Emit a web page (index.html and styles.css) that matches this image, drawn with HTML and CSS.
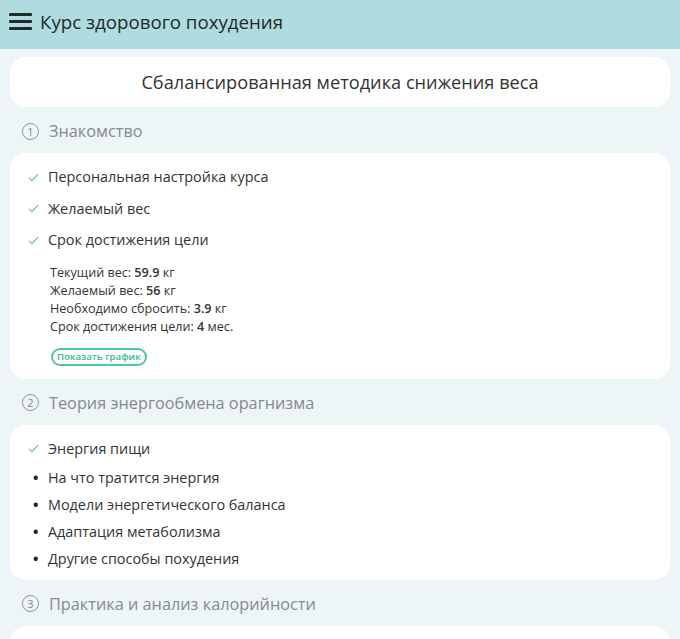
FILE: index.html
```html
<!DOCTYPE html>
<html lang="ru">
<head>
  <meta charset="UTF-8">
  <meta name="viewport" content="width=device-width, initial-scale=1.0">
  <title>Курс здорового похудения</title>
  <link rel="stylesheet" href="styles.css">
</head>
<body>
  <header class="topbar">
    <span class="burger"><i></i><i></i><i></i></span>
    <span class="topbar-title">Курс здорового похудения</span>
  </header>

  <main class="content">
    <div class="card intro">Сбалансированная методика снижения веса</div>

    <h2 class="section-title"><span class="num">1</span>Знакомство</h2>
    <div class="card lessons">
      <div class="lesson done"><svg class="tick" viewBox="0 0 12 10"><path d="M1 5.5 L4.2 8.6 L11 1.2"/></svg>Персональная настройка курса</div>
      <div class="lesson done"><svg class="tick" viewBox="0 0 12 10"><path d="M1 5.5 L4.2 8.6 L11 1.2"/></svg>Желаемый вес</div>
      <div class="lesson done"><svg class="tick" viewBox="0 0 12 10"><path d="M1 5.5 L4.2 8.6 L11 1.2"/></svg>Срок достижения цели</div>
      <div class="summary">
        <div>Текущий вес: <b>59.9</b> кг</div>
        <div>Желаемый вес: <b>56</b> кг</div>
        <div>Необходимо сбросить: <b>3.9</b> кг</div>
        <div>Срок достижения цели: <b>4</b> мес.</div>
      </div>
      <button class="chart-btn">Показать график</button>
    </div>

    <h2 class="section-title"><span class="num">2</span>Теория энергообмена орагнизма</h2>
    <div class="card lessons compact">
      <div class="lesson done"><svg class="tick" viewBox="0 0 12 10"><path d="M1 5.5 L4.2 8.6 L11 1.2"/></svg>Энергия пищи</div>
      <div class="lesson">На что тратится энергия</div>
      <div class="lesson">Модели энергетического баланса</div>
      <div class="lesson">Адаптация метаболизма</div>
      <div class="lesson">Другие способы похудения</div>
    </div>

    <h2 class="section-title"><span class="num">3</span>Практика и анализ калорийности</h2>
    <div class="card tail"></div>
  </main>
</body>
</html>
```

FILE: styles.css
```css
body {
  margin: 0;
  background: #edf5f7;
  color: #333333;
  font-family: "Open Sans", "Noto Sans", sans-serif;
}
.topbar {
  height: 49px;
  background: #b0dbdf;
  display: flex;
  align-items: center;
  padding: 0 9px;
  box-sizing: border-box;
}
.burger {
  width: 23px;
  display: flex;
  flex-direction: column;
  gap: 4px;
  margin-right: 8px;
  margin-top: -6px;
}
.burger i {
  display: block;
  height: 3px;
  background: #1f2a2c;
  border-radius: 1px;
}
.topbar-title {
  font-size: 18.7px;
  color: #1f2a2c;
  margin-top: -6px;
}
.content {
  padding: 8px 10px;
}
.card {
  background: #ffffff;
  border-radius: 16px;
}
.intro {
  height: 50px;
  line-height: 50px;
  text-align: center;
  font-size: 18.2px;
}
.section-title {
  margin: 0;
  padding: 13px 0 11px 12px;
  display: flex;
  align-items: center;
  line-height: 22px;
  font-size: 16.3px;
  font-weight: normal;
  color: #858a8b;
}
.section-title .num {
  width: 15px;
  height: 15px;
  border: 1.2px solid #8d9293;
  border-radius: 50%;
  display: inline-flex;
  align-items: center;
  justify-content: center;
  font-size: 11px;
  line-height: 1;
  margin-right: 10px;
}
.lessons {
  padding: 8px 18px 13px 8px;
}
.lesson {
  position: relative;
  padding-left: 30px;
  line-height: 31.5px;
  font-size: 14.4px;
}
.lesson::before {
  content: "•";
  position: absolute;
  left: 15px;
  color: #222;
  font-weight: bold;
}
.lesson.done::before {
  content: none;
}
.tick {
  position: absolute;
  left: 10px;
  top: 50%;
  width: 11px;
  height: 9px;
  margin-top: -4px;
  fill: none;
  stroke: #62c49d;
  stroke-width: 1.3;
}
.compact {
  padding: 10px 18px 8px 8px;
}
.compact .lesson {
  line-height: 27px;
}
.compact .lesson:first-child {
  margin-bottom: 2px;
}
.summary {
  margin: 8px 0 0 32px;
  font-size: 12.6px;
  line-height: 18px;
}
.summary b {
  font-weight: 600;
}
.chart-btn {
  display: block;
  margin: 12px 0 0 33px;
  height: 18px;
  padding: 0 4px;
  border: 2px solid #4ec99a;
  border-radius: 9px;
  background: #ffffff;
  color: #3db889;
  font-family: inherit;
  font-size: 9.7px;
  font-weight: 600;
  line-height: 13px;
  cursor: pointer;
}
.tail {
  height: 40px;
}
```
